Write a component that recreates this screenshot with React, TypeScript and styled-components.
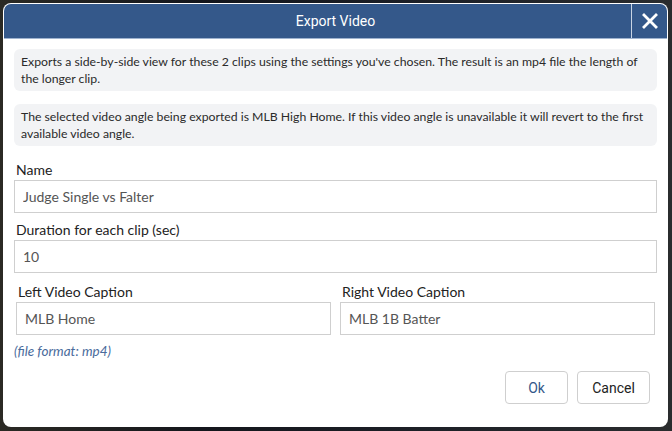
import React from "react";
import styled, { createGlobalStyle } from "styled-components";

const GlobalStyle = createGlobalStyle`
  html, body {
    margin: 0;
    padding: 0;
  }
  body {
    width: 672px;
    height: 431px;
    overflow: hidden;
    background: linear-gradient(90deg, #2b2a24 0%, #14161c 30%, #1c1f26 60%, #2a2c2e 100%);
    font-family: Lato, "Open Sans", sans-serif;
  }
`;

// 모달 레이아웃
const Backdrop = styled.div`
  padding: 3px 4px 0 3px;
`;

const Dialog = styled.div`
  width: 665px;
  height: 424px;
  box-sizing: border-box;
  background: #fff;
  border-radius: 8px;
  padding: 1px;
  display: flex;
  flex-direction: column;
`;

const Header = styled.div`
  height: 35px;
  display: flex;
  background: #34588a;
  border-radius: 7px 7px 0 0;
  border-bottom: 1px solid #9fb3cf;
  box-sizing: border-box;
`;

const Title = styled.div`
  flex: 1;
  display: flex;
  align-items: center;
  justify-content: center;
  padding-left: 36px;
  color: #fff;
  font-family: Roboto, "Liberation Sans", sans-serif;
  font-size: 14px;
`;

const CloseButton = styled.button`
  width: 36px;
  border: none;
  border-left: 1px solid #c9d4e4;
  background: transparent;
  display: flex;
  align-items: center;
  justify-content: center;
  padding: 0;
  cursor: pointer;
`;

const Body = styled.div`
  padding: 10px 10px 0 10px;
  display: flex;
  flex-direction: column;
`;

const Notice = styled.div`
  background: #f2f3f5;
  border-radius: 6px;
  padding: 4px 4px 4px 7px;
  min-height: 42px;
  box-sizing: border-box;
  font-size: 12.25px;
  line-height: 17px;
  color: #2a2a2a;
  & + & {
    margin-top: 13px;
  }
`;

const Field = styled.div<{ $first?: boolean }>`
  margin-top: ${(p) => (p.$first ? "14px" : "0")};
  display: flex;
  flex-direction: column;
`;

const Label = styled.label<{ $gap?: number }>`
  height: 20px;
  line-height: 20px;
  margin-top: ${(p) => p.$gap ?? 0}px;
  padding-left: 2px;
  font-size: 14px;
  color: #222;
`;

const Input = styled.input`
  height: 33px;
  box-sizing: border-box;
  border: 1px solid #cfcfcf;
  border-radius: 0;
  padding: 0 8px;
  font-family: Lato, "Open Sans", sans-serif;
  font-size: 14px;
  color: #555;
  outline: none;
`;

const CaptionRow = styled.div`
  margin-top: 9px;
  padding: 0 2px;
  display: grid;
  grid-template-columns: 1fr 1fr;
  gap: 9px;
`;

const FormatNote = styled.div`
  margin-top: 8px;
  font-size: 13.5px;
  line-height: 17px;
  font-style: italic;
  color: #4a6b9c;
`;

const Actions = styled.div`
  margin-top: 11px;
  padding-right: 7px;
  display: flex;
  justify-content: flex-end;
  gap: 9px;
`;

const ActionButton = styled.button<{ $primary?: boolean; $width: number }>`
  width: ${(p) => p.$width}px;
  height: 33px;
  background: #fff;
  border: 1px solid #cfcfcf;
  border-radius: 4px;
  font-family: Roboto, "Liberation Sans", sans-serif;
  font-size: 14px;
  color: ${(p) => (p.$primary ? "#34588a" : "#222")};
  cursor: pointer;
`;

const CloseIcon = () => (
  <svg width="16" height="16" viewBox="0 0 16 16">
    <path d="M2 2 L14 14 M14 2 L2 14" stroke="#fff" strokeWidth="2.8" strokeLinecap="square" />
  </svg>
);

const App: React.FC = () => {
  return (
    <>
      <GlobalStyle />
      <Backdrop>
        <Dialog>
          <Header>
            <Title>Export Video</Title>
            <CloseButton aria-label="Close">
              <CloseIcon />
            </CloseButton>
          </Header>
          <Body>
            <Notice>
              Exports a side-by-side view for these 2 clips using the settings you've chosen. The result is an mp4 file the length of the longer clip.
            </Notice>
            <Notice>
              The selected video angle being exported is MLB High Home. If this video angle is unavailable it will revert to the first available video angle.
            </Notice>
            <Field $first>
              <Label>Name</Label>
              <Input defaultValue="Judge Single vs Falter" />
            </Field>
            <Field>
              <Label $gap={7}>Duration for each clip (sec)</Label>
              <Input defaultValue="10" />
            </Field>
            <CaptionRow>
              <Field>
                <Label>Left Video Caption</Label>
                <Input defaultValue="MLB Home" />
              </Field>
              <Field>
                <Label>Right Video Caption</Label>
                <Input defaultValue="MLB 1B Batter" />
              </Field>
            </CaptionRow>
            <FormatNote>(file format: mp4)</FormatNote>
            <Actions>
              <ActionButton $primary $width={63}>Ok</ActionButton>
              <ActionButton $width={73}>Cancel</ActionButton>
            </Actions>
          </Body>
        </Dialog>
      </Backdrop>
    </>
  );
};

export default App;
